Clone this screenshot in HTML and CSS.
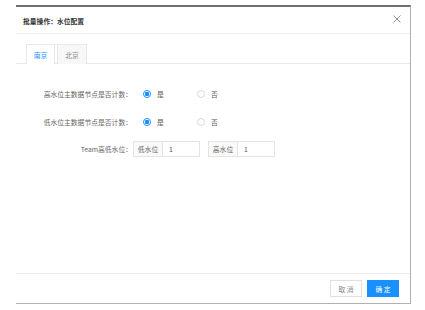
FILE: index.html
```html
<!DOCTYPE html>
<html lang="zh-CN">
<head>
	<meta charset="UTF-8">
	<title>批量操作：水位配置</title>
	<link rel="stylesheet" href="styles.css">
</head>
<body>
	<div class="dialog">
		<div class="dlg-head">
			<span class="dlg-title">批量操作：水位配置</span>
			<svg class="dlg-close" width="8" height="8" viewBox="0 0 8 8"><path d="M0.5 0.5L7.5 7.5M7.5 0.5L0.5 7.5" stroke="#8a8a8a" stroke-width="0.9" fill="none"/></svg>
		</div>
		<div class="dlg-body">
			<div class="tabs">
				<div class="tab on">南京</div>
				<div class="tab">北京</div>
			</div>
			<div class="form">
				<div class="row">
					<div class="lbl">高水位主数据节点是否计数：</div>
					<div class="radios">
						<span class="radio checked"><i></i>是</span>
						<span class="radio"><i></i>否</span>
					</div>
				</div>
				<div class="row">
					<div class="lbl">低水位主数据节点是否计数：</div>
					<div class="radios">
						<span class="radio checked"><i></i>是</span>
						<span class="radio"><i></i>否</span>
					</div>
				</div>
				<div class="row">
					<div class="lbl">Team高低水位：</div>
					<div class="inputs">
						<div class="group"><span class="addon">低水位</span><span class="val">1</span></div>
						<div class="group"><span class="addon">高水位</span><span class="val">1</span></div>
					</div>
				</div>
			</div>
		</div>
		<div class="dlg-foot">
			<span class="btn">取 消</span>
			<span class="btn primary">确 定</span>
		</div>
	</div>
</body>
</html>
```
FILE: styles.css
```css
*{margin: 0;padding: 0;box-sizing: border-box;}
body{background: #fff;font-family: "Noto Sans CJK SC", "Noto Sans", sans-serif;font-size: 6.8px;color: #666;}
.dialog{margin: 5px 0 0 16px;width: 395px;height: 299px;border-top: 2px solid #6e6e6e;border-right: 1px solid #b0b0b0;border-bottom: 1px solid #b0b0b0;display: flex;flex-direction: column;}
.dlg-head{height: 27px;display: flex;align-items: center;justify-content: space-between;padding: 1px 9px 0 7px;border-bottom: 1px solid #f0f0f0;}
.dlg-title{font-weight: bold;color: #333;}
.dlg-close{display: block;margin-top: -3px;}
.dlg-body{flex: 1;padding-top: 10px;}
.tabs{display: flex;gap: 2px;padding-left: 10px;border-bottom: 1px solid #e8e8e8;height: 20px;}
.tab{width: 29px;height: 20px;display: flex;align-items: center;justify-content: center;border: 1px solid #e8e8e8;border-bottom: none;background: #f7f7f7;color: #888;}
.tab + .tab{width: 30px;}
.tab.on{background: #fff;color: #1890ff;margin-bottom: -1px;}
.form{padding-top: 16px;}
.row{display: flex;align-items: center;height: 28px;}
.row:last-child{height: 26px;}
.lbl{width: 116px;text-align: right;color: #666;}
.radios{display: flex;padding-left: 11px;}
.radio{display: flex;align-items: center;width: 54px;color: #555;}
.radio i{width: 8px;height: 8px;border: 1px solid #d9d9d9;border-radius: 50%;margin-right: 6px;background: #fff;}
.radio.checked i{border-color: #1890ff;background: radial-gradient(circle, #1890ff 0 2px, #fff 2.5px);}
.inputs{display: flex;gap: 8px;padding-left: 1px;}
.group{display: flex;width: 67px;height: 16px;border: 1px solid #e4e4e4;}
.addon{width: 29px;display: flex;align-items: center;justify-content: center;border-right: 1px solid #e4e4e4;background: #fafafa;color: #666;}
.val{padding-left: 6px;display: flex;align-items: center;color: #555;}
.dlg-foot{height: 30px;border-top: 1px solid #ececec;display: flex;justify-content: flex-end;align-items: flex-start;gap: 5px;padding: 6px 11px 0 0;}
.btn{width: 32px;height: 17px;display: flex;align-items: center;justify-content: center;border: 1px solid #e0e0e0;background: #fff;color: #888;}
.btn.primary{background: #1890ff;border-color: #1890ff;color: #fff;}
```
